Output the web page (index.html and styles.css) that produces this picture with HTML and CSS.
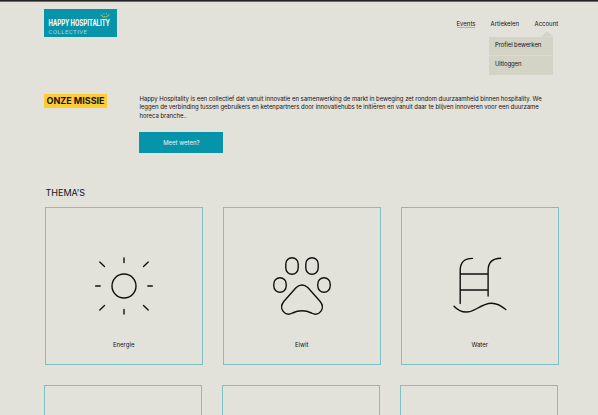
FILE: index.html
```html
<!DOCTYPE html>
<html lang="nl">
<head>
<meta charset="utf-8">
<title>Happy Hospitality Collective</title>
<link rel="stylesheet" href="styles.css">
</head>
<body>
<header class="header">
  <a class="logo">
    <svg width="73" height="28" viewBox="0 0 73 28">
      <path class="logo-smile" d="M56.500 6H57.700Q58 7.800 59.500 7.800H62.500Q64 7.800 64.300 6H65.500M59.300 4.700H60.300M62 4.700H63"/>
      <text class="logo-name" x="4.5" y="17.3" textLength="61" lengthAdjust="spacingAndGlyphs">HAPPY HOSPITALITY</text>
      <text class="logo-sub" x="4.5" y="24.6" textLength="38.5" lengthAdjust="spacing">COLLECTIVE</text>
    </svg>
  </a>
  <nav class="nav">
    <a class="link events">Events</a>
    <a class="link articles">Artiekelen</a>
    <div class="account">
      <a class="link account-link">Account</a>
      <div class="menu">
        <a class="item edit">Profiel bewerken</a>
        <a class="item logout">Uitloggen</a>
      </div>
    </div>
  </nav>
</header>
<main>
  <section class="mission">
    <h1 class="badge"><span>ONZE MISSIE</span></h1>
    <div class="intro">
      <p class="copy">
        <span class="line">Happy Hospitality is een collectief dat vanuit innovatie en samenwerking de markt in beweging zet rondom duurzaamheid binnen hospitality. We</span>
        <span class="line">leggen de verbinding tussen gebruikers en ketenpartners door innovatiehubs te initiëren en vanuit daar te blijven innoveren voor een duurzame</span>
        <span class="line">horeca branche..</span>
      </p>
      <a class="button">Meet weten?</a>
    </div>
  </section>
  <section class="themes">
    <h2 class="title">THEMA’S</h2>
    <div class="grid">
      <article class="card">
        <svg class="icon" width="76" height="76" viewBox="0 0 76 76">
          <circle cx="38" cy="38" r="12"/>
          <path d="M38 10v4.500M38 61.500V66M9.700 38h4.500M61.800 38h4.500M13.800 14l4.700 4.500M57.500 18.500l4.700-4.500M13.800 62l4.700-4.500M57.500 57.500l4.700 4.500"/>
        </svg>
        <span class="label">Energie</span>
      </article>
      <article class="card">
        <svg class="icon" width="76" height="76" viewBox="0 0 76 76">
          <rect x="21.800" y="9.800" width="12.400" height="16.400" rx="6.200"/>
          <rect x="41.800" y="9.800" width="12.400" height="16.400" rx="6.200"/>
          <rect x="9.800" y="29.800" width="12.400" height="14.400" rx="6.200"/>
          <rect x="53.800" y="29.800" width="12.400" height="14.400" rx="6.200"/>
          <path d="M32.200 39.500Q38 34.500 43.800 39.500L56 53.200C62 60.500 55 69 47.500 65Q38 60.500 28.500 65C21 69 14 60.500 20 53.200Z"/>
        </svg>
        <span class="label">Eiwit</span>
      </article>
      <article class="card">
        <svg class="icon" width="76" height="76" viewBox="0 0 76 76">
          <path d="M18.200 55.500V22.500Q18.200 10.400 30.500 10.400M46.100 48V22.500Q46.100 10.400 58.700 10.200M18.200 26H46.100M18.200 42H46.100M12 58.200C18 64.500 26 66 35 60.500C46 54 53 52.500 63.800 61.500"/>
        </svg>
        <span class="label">Water</span>
      </article>
    </div>
    <div class="grid next">
      <article class="card"></article>
      <article class="card"></article>
      <article class="card"></article>
    </div>
  </section>
</main>
</body>
</html>
```
FILE: styles.css
```css
* { box-sizing: border-box; }
html, body { height: 100%; overflow: hidden; }
body {
  margin: 0;
  border-top: 1px solid #242424;
  background: #e2e1da;
  color: #151515;
  font: 6px/8.5px Inter, "Open Sans", sans-serif;
}
.header {
  display: flex;
  justify-content: space-between;
  height: 93px;
  padding: 7px 40px 0 44px;
  border-top: 1px solid #6a6969;
}
.logo { width: 73px; height: 28px; background: #0794aa; }
.logo svg { display: block; overflow: visible; }
.logo-name { font: 700 9.500px Roboto, sans-serif; fill: #fff; }
.logo-sub { font: 400 6px Roboto, sans-serif; fill: #a9dbe1; }
.logo-smile { fill: none; stroke: #c9c030; stroke-width: 1; }
.nav { display: flex; align-items: flex-start; padding-top: 10px; }
.link { display: block; height: 9px; line-height: 10px; white-space: nowrap; }
.events { width: 18.500px; margin-right: 15.500px; border-bottom: 1px solid #7bc5ca; }
.articles { width: 28px; margin-right: 15.500px; }
.account { position: relative; left: 0.5px; width: 24px; }
.menu {
  position: absolute;
  top: 17.500px;
  left: -45.200px;
  width: 64px;
  height: 38.500px;
  background: #d3d3c6;
}
.menu::before {
  content: "";
  position: absolute;
  top: -5px;
  right: 0;
  width: 12px;
  height: 5px;
  background: #d3d3c6;
  clip-path: polygon(50% 0, 100% 100%, 0 100%);
}
.item { display: flex; align-items: center; height: 18px; padding: 0 0 0 5.700px; letter-spacing: -0.100px; white-space: nowrap; }
.item + .item { border-top: 1px solid #dcdcd2; }
.mission { display: flex; height: 92px; padding-left: 44px; }
.badge {
  display: flex;
  align-items: center;
  justify-content: center;
  width: 63px;
  height: 14px;
  margin: 0 32.400px 0 0;
  background: #ffcb32;
  font-size: 9px;
  font-weight: 700;
  white-space: nowrap;
}
.copy { margin: 0 0 11.500px; padding-top: 0.5px; letter-spacing: -0.043px; }
.line { display: block; white-space: nowrap; }
.button {
  display: flex;
  align-items: center;
  justify-content: center;
  width: 84px;
  height: 21.500px;
  padding-top: 1px;
  background: #0794aa;
  color: #e9f6f6;
}
.title { margin: 0 0 8px 45.500px; font-size: 9px; line-height: 13px; font-weight: 400; }
.grid { display: grid; grid-template-columns: repeat(3, 158px); gap: 20px; margin-left: 45px; }
.next { margin: 20px 0 0 44px; }
.card {
  display: flex;
  flex-direction: column;
  align-items: center;
  height: 158px;
  padding-top: 40px;
  border: 1px solid #7bc1c5;
}
.next .card { height: 30px; padding: 0; border-bottom: 0; }
.icon { margin-left: -0.600px; fill: none; stroke: #111; stroke-width: 1.400; stroke-linecap: round; stroke-linejoin: round; }
.label { margin: 16.500px 0 0 -0.600px; }
```
